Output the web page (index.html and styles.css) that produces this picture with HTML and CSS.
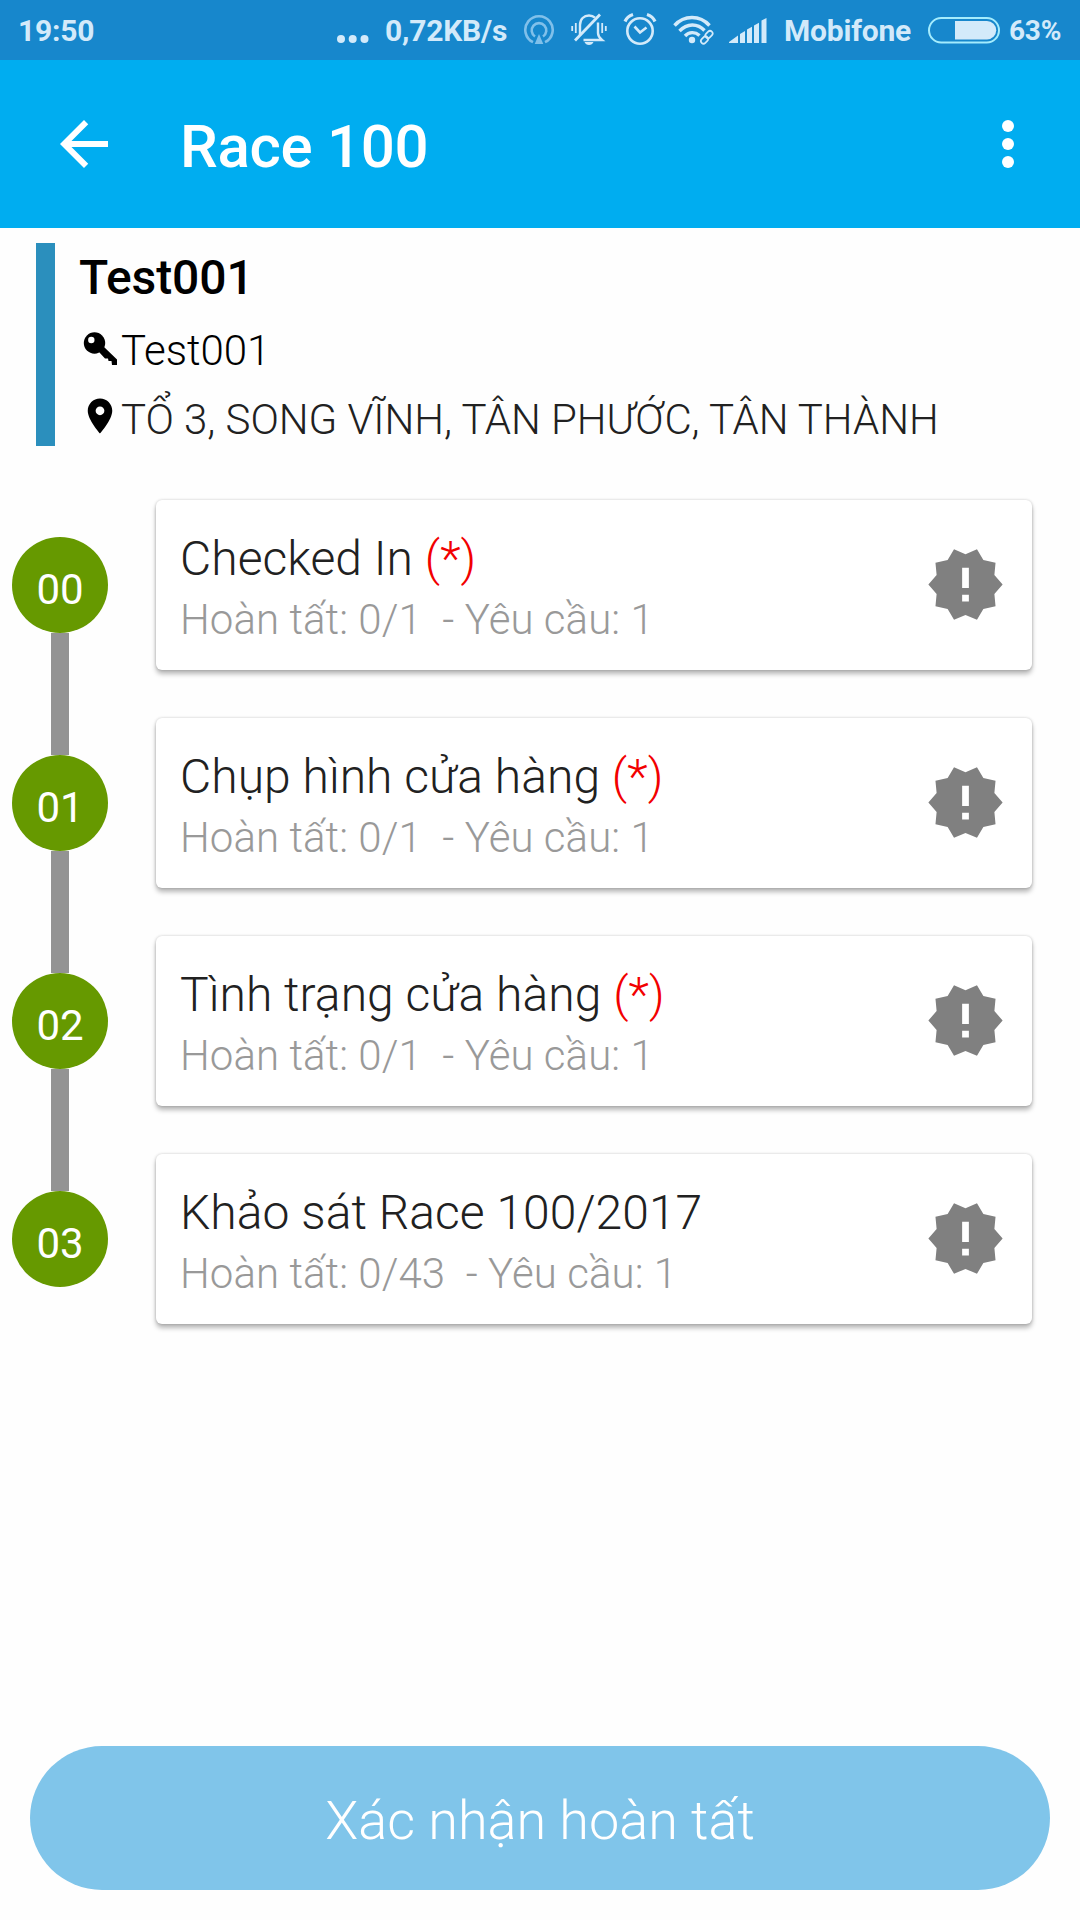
FILE: index.html
```html
<!DOCTYPE html>
<html lang="vi">
<head>
  <meta charset="UTF-8" />
  <meta name="viewport" content="width=device-width, initial-scale=1.0" />
  <title>Race 100</title>
  <link rel="stylesheet" href="styles.css">
</head>
<body>
  <svg width="0" height="0" class="defs">
    <symbol id="seal" viewBox="0 0 24 24">
      <path d="M23 12l-2.44-2.78.34-3.68-3.61-.82-1.89-3.18L12 3 8.6 1.54 6.71 4.72l-3.61.81.34 3.68L1 12l2.44 2.78-.34 3.69 3.61.82 1.89 3.18L12 21l3.4 1.46 1.89-3.18 3.61-.82-.34-3.68L23 12zm-10 5h-2v-2h2v2zm0-4h-2V7h2v6z"/>
    </symbol>
  </svg>

  <div class="status-bar">
    <span class="time">19:50</span>
    <svg class="dots" width="32" height="60" viewBox="0 0 32 60" fill="currentColor">
      <circle cx="4" cy="39" r="4"/><circle cx="15.700" cy="39" r="4"/><circle cx="27.500" cy="39" r="4"/>
    </svg>
    <span class="speed">0,72KB/s</span>
    <svg class="hotspot" width="32" height="60" viewBox="0 0 32 60" fill="none" stroke="currentColor" stroke-width="2.600">
      <path d="M10 42.200A13.700 13.700 0 1 1 22 42.200"/>
      <path d="M12 36.500A7.300 7.300 0 1 1 20 36.500"/>
      <path d="M16 34l4.300 10h-8.600z" fill="currentColor" stroke="none"/>
    </svg>
    <svg class="mute" width="36" height="60" viewBox="0 0 36 60" fill="none" stroke="currentColor" stroke-width="2.400">
      <path d="M9 35V25c0-6 4-9.500 9-9.500 2.500 0 4.500.8 6 2.200"/>
      <path d="M27 22.500V33c0 3 1.500 5 4 7H12.500"/>
      <path d="M4 40.500L29 14.500" stroke-width="2.800"/>
      <path d="M1.200 26v5M4.800 23v10M31.200 23v10M34.800 26v5" stroke-width="1.800"/>
      <path d="M13.500 42h9c-.8 2-2.400 3-4.500 3s-3.700-1-4.500-3z" fill="currentColor" stroke="none"/>
    </svg>
    <svg class="alarm" width="34" height="60" viewBox="0 0 34 60" fill="none" stroke="currentColor" stroke-width="2.600">
      <circle cx="17" cy="31" r="12.700"/>
      <path d="M11.500 26.500l5.500 6 6.500-5"/>
      <path d="M2 21.500c1.500-3.500 4-5.700 8-7M32 21.500c-1.500-3.500-4-5.700-8-7" stroke-width="3.200"/>
    </svg>
    <svg class="wifi" width="41" height="60" viewBox="0 0 41 60" fill="none" stroke="currentColor" stroke-width="3.400">
      <path d="M1.500 25.500C11 14.800 27 14.800 36.500 25.500"/>
      <path d="M6.500 31C14 23 24.500 23 31.500 30.500"/>
      <path d="M12 36c4-4.200 10-4.500 14.500-.5"/>
      <circle cx="19" cy="40" r="3.200" fill="currentColor" stroke="none"/>
      <g stroke-width="1.700">
        <rect x="-4" y="-2.600" width="8" height="5.200" rx="2.600" transform="translate(36 34.500) rotate(-45)"/>
        <rect x="-4" y="-2.600" width="8" height="5.200" rx="2.600" transform="translate(31.500 40) rotate(-45)"/>
      </g>
    </svg>
    <svg class="signal" width="38" height="60" viewBox="0 0 38 60" fill="currentColor">
      <path d="M0 43v-1l9-6.500V43zM11 43v-9l5-3v12zM18 43V29.500l5-2.700V43zM25 43V25.500l5-2.700V43zM32.500 43V20.500l5-2.500v25z"/>
    </svg>
    <span class="carrier">Mobifone</span>
    <svg class="battery" width="72" height="60" viewBox="0 0 72 60">
      <rect x="1" y="18" width="70" height="24.500" rx="12.250" fill="none" stroke="#a4ecfd" stroke-width="2"/>
      <path d="M27 21h32a9.200 9.200 0 0 1 0 18.400H27z" fill="currentColor"/>
    </svg>
    <span class="percent">63%</span>
  </div>

  <header class="toolbar">
    <svg width="72" height="72" viewBox="0 0 24 24" fill="#fff">
      <path d="M20 11H7.830l5.590-5.590L12 4l-8 8 8 8 1.410-1.410L7.830 13H20v-2z"/>
    </svg>
    <h1>Race 100</h1>
    <svg width="72" height="72" viewBox="0 0 24 24" fill="#fff">
      <circle cx="12" cy="6" r="2"/><circle cx="12" cy="12" r="2"/><circle cx="12" cy="18" r="2"/>
    </svg>
  </header>

  <section class="store">
    <h2>Test001</h2>
    <p class="code">
      <svg width="42" height="42" viewBox="0 0 42 42">
        <circle cx="15.500" cy="16" r="10.700"/>
        <path d="M20 25l5-5 13 12.500v5.500h-5l-.5-4h-3l-.5-2.500h-3z"/>
        <circle cx="12.300" cy="13" r="3.200" fill="#fff"/>
      </svg>
      <span>Test001</span>
    </p>
    <p class="address">
      <svg width="42" height="42" viewBox="0 0 24 24">
        <path d="M12 2C8.130 2 5 5.130 5 9c0 5.250 7 13 7 13s7-7.750 7-13c0-3.870-3.130-7-7-7zm0 9.500a2.500 2.500 0 1 1 0-5 2.500 2.500 0 0 1 0 5z"/>
      </svg>
      <span>TỔ 3, SONG VĨNH, TÂN PHƯỚC, TÂN THÀNH</span>
    </p>
  </section>

  <main class="steps">
    <div class="rail">
      <div class="num">00</div>
      <div class="line"></div>
      <div class="num">01</div>
      <div class="line"></div>
      <div class="num">02</div>
      <div class="line"></div>
      <div class="num">03</div>
    </div>
    <div class="cards">
      <div class="card">
        <div>
          <h3>Checked In <em>(*)</em></h3>
          <p>Hoàn tất: 0/1  - Yêu cầu: 1</p>
        </div>
        <svg width="81" height="81"><use href="#seal"/></svg>
      </div>
      <div class="card">
        <div>
          <h3>Chụp hình cửa hàng <em>(*)</em></h3>
          <p>Hoàn tất: 0/1  - Yêu cầu: 1</p>
        </div>
        <svg width="81" height="81"><use href="#seal"/></svg>
      </div>
      <div class="card">
        <div>
          <h3>Tình trạng cửa hàng <em>(*)</em></h3>
          <p>Hoàn tất: 0/1  - Yêu cầu: 1</p>
        </div>
        <svg width="81" height="81"><use href="#seal"/></svg>
      </div>
      <div class="card">
        <div>
          <h3>Khảo sát Race 100/2017</h3>
          <p>Hoàn tất: 0/43  - Yêu cầu: 1</p>
        </div>
        <svg width="81" height="81"><use href="#seal"/></svg>
      </div>
    </div>
  </main>

  <button class="confirm">Xác nhận hoàn tất</button>
</body>
</html>
```

FILE: styles.css
```css
* {
  margin: 0;
  padding: 0;
  box-sizing: border-box;
}

body {
  display: flex;
  flex-direction: column;
  height: 1920px;
  font-family: Roboto, sans-serif;
  background: #fefefe;
  color: #212121;
  overflow: hidden;
}

svg {
  display: block;
  flex-shrink: 0;
}

.defs {
  position: absolute;
}

/* status bar */
.status-bar {
  display: flex;
  align-items: center;
  height: 60px;
  padding-left: 18px;
  background: #1787cc;
  color: #d3eafa;
  font-size: 30px;
  font-weight: 700;
  line-height: 60px;
  white-space: nowrap;
  flex-shrink: 0;
}

.status-bar span {
  padding-top: 1px;
  letter-spacing: -0.2px;
  flex-shrink: 0;
}

.time {
  width: 319px;
}

.speed {
  width: 138px;
  margin-left: 16px;
}

.hotspot {
  color: #80c0ea;
}

.mute {
  margin-left: 16px;
}

.alarm {
  margin-left: 16px;
}

.wifi {
  margin-left: 16px;
}

.signal {
  margin-left: 15px;
}

.carrier {
  width: 144px;
  margin-left: 17px;
}

.battery {
  color: #d3eafa;
}

.percent {
  margin-left: 9px;
  font-size: 28px;
}

/* toolbar */
.toolbar {
  display: flex;
  align-items: center;
  height: 168px;
  padding: 0 36px 0 48px;
  background: #00adf0;
  color: #fff;
  flex-shrink: 0;
}

.toolbar h1 {
  flex: 1;
  margin-left: 60px;
  padding-top: 6px;
  font-size: 60px;
  font-weight: 500;
  letter-spacing: -0.3px;
  line-height: 72px;
}

/* store info */
.store {
  height: 203px;
  margin: 15px 36px 0;
  padding: 7px 0 0 24px;
  border-left: 19px solid #2b8fbd;
  flex-shrink: 0;
}

.store h2 {
  color: #000;
  font-size: 48px;
  font-weight: 500;
  letter-spacing: -0.1px;
  line-height: 56px;
}

.store p {
  display: flex;
  align-items: center;
  font-size: 42px;
  font-weight: 300;
  letter-spacing: -0.04px;
  line-height: 50px;
  white-space: nowrap;
}

.store .code {
  margin-top: 20px;
  color: #000;
}

.store .address {
  margin-top: 19px;
}

.store svg {
  fill: #000;
}

.code svg {
  margin-top: -6px;
}

.address svg {
  margin-top: -8px;
}

/* steps */
.steps {
  display: flex;
  padding: 54px 48px 0 12px;
}

.rail {
  display: flex;
  flex-direction: column;
  align-items: center;
  width: 96px;
  margin-right: 48px;
  padding-top: 37px;
}

.num {
  width: 96px;
  height: 96px;
  padding-top: 5px;
  border-radius: 50%;
  background: #669900;
  color: #fff;
  font-size: 42px;
  line-height: 96px;
  text-align: center;
}

.line {
  width: 18px;
  height: 122px;
  background: #939393;
}

.cards {
  flex: 1;
  display: flex;
  flex-direction: column;
  gap: 48px;
}

.card {
  display: flex;
  justify-content: space-between;
  align-items: center;
  height: 170px;
  padding: 0 26px 0 24px;
  border-radius: 6px;
  background: #fff;
  box-shadow: 0 4px 5px rgba(0, 0, 0, 0.28), 0 0 3px rgba(0, 0, 0, 0.2);
}

.card h3 {
  font-size: 48px;
  font-weight: 300;
  letter-spacing: 0.05px;
  line-height: 56px;
}

.card em {
  color: #f20000;
  font-style: normal;
}

.card p {
  margin-top: 8px;
  margin-bottom: -6px;
  color: #999;
  font-size: 42px;
  font-weight: 300;
  letter-spacing: 0.06px;
  line-height: 50px;
  white-space: pre;
}

.card svg {
  margin-top: -1px;
  fill: #808080;
}

/* bottom button */
.confirm {
  height: 144px;
  margin: auto 30px 30px;
  padding-top: 4px;
  border: none;
  border-radius: 72px;
  background: #80c5ea;
  color: #fff;
  font-family: inherit;
  font-size: 54px;
  font-weight: 300;
  flex-shrink: 0;
}
```
